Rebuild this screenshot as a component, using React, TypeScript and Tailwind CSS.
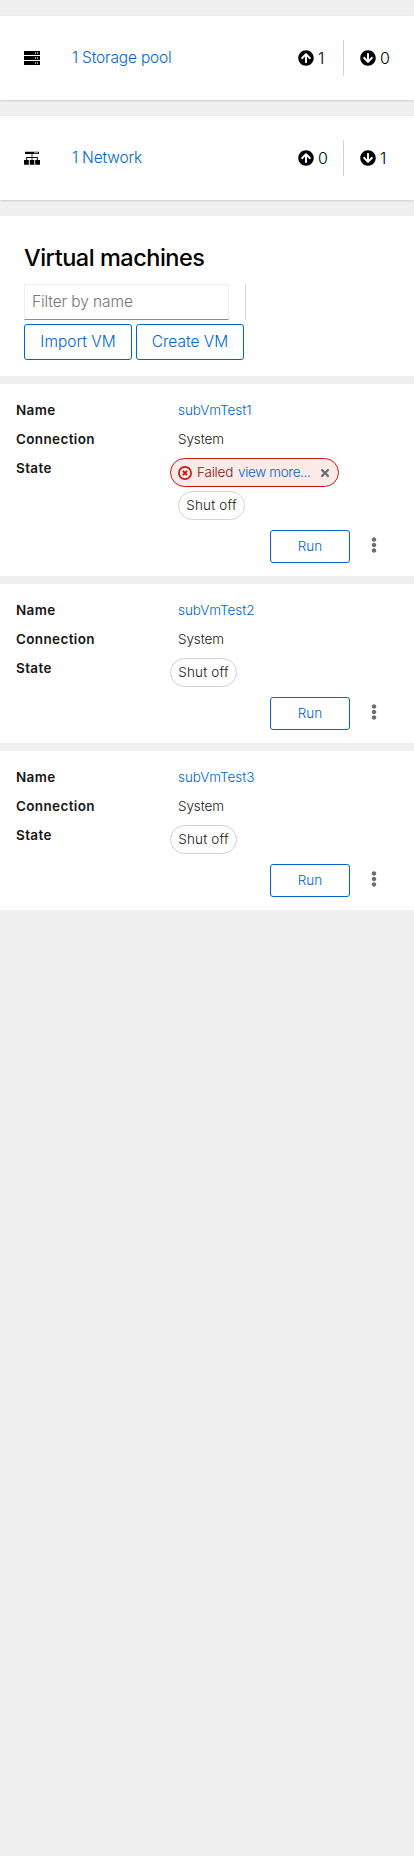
import React from "react";
import { FaArrowCircleUp, FaArrowCircleDown, FaTimes, FaEllipsisV } from "react-icons/fa";

function StorageIcon() {
  return (
    <svg width="16" height="14" viewBox="0 0 16 14" className="block">
      <path d="M.5 0h15a.5.5 0 0 1 .5.5V4H0V.5A.5.5 0 0 1 .5 0zM0 5h16v4H0zM0 10h16v3.500a.5.5 0 0 1-.5.5H.5a.5.5 0 0 1-.5-.5z" />
      <path fill="#ccc" d="M11 1.200h1v1.600h-1zM13 1.200h1v1.600h-1zM11 6.200h1v1.600h-1zM13 6.200h1v1.600h-1zM11 11.200h1v1.600h-1zM13 11.200h1v1.600h-1z" />
    </svg>
  );
}

function NetworkIcon() {
  return (
    <svg width="16" height="14" viewBox="0 0 16 14" className="block">
      <path d="M1 .7h14V3H1zM7.600 3h.8v3h5.400v3h-1V7H8.400v2h-.8V7H3.200v2h-1V6h5.400zM0 9h4.800v4.700H0zM5.800 9h4.500v4.700H5.800zM11.200 9H16v4.700h-4.800z" />
      <path fill="#ccc" d="M10 1.300h4v1h-4z" />
    </svg>
  );
}

function ErrorIcon() {
  return (
    <svg width="14" height="14" viewBox="0 0 14 14" fill="none" stroke="#c9190b" className="block shrink-0">
      <circle cx="7" cy="7" r="6.100" strokeWidth="1.700" />
      <path d="M4.900 4.900l4.200 4.200M9.100 4.900L4.900 9.100" strokeWidth="1.900" />
    </svg>
  );
}

function ResourceCard({ icon, label, up, down }: { icon: React.ReactNode; label: string; up: number; down: number }) {
  return (
    <section className="flex h-[84px] items-center bg-white px-6 text-[15.5px] font-[360] shadow-[0_1px_2px_0_rgba(3,3,3,0.12),0_0_2px_0_rgba(3,3,3,0.06)]">
      <span className="w-12">{icon}</span>
      <a className="flex-1 pb-px tracking-[-0.18px] text-[#0066cc]">{label}</a>
      <div className="flex h-9 items-center">
        <span className="flex w-[45px] items-center gap-1">
          <FaArrowCircleUp size={16} />
          <span className="pb-px text-base">{up}</span>
        </span>
        <span className="h-9 w-px bg-[#d2d2d2]" />
        <span className="ml-4 flex w-[30px] items-center gap-1">
          <FaArrowCircleDown size={16} />
          <span className="pb-px text-base">{down}</span>
        </span>
      </div>
    </section>
  );
}

function Pill({ children }: { children: React.ReactNode }) {
  return (
    <span className="flex h-[29px] w-[67px] items-center justify-center rounded-full border border-[#d2d2d2] pb-px tracking-[0.15px]">
      {children}
    </span>
  );
}

function VmRow({ name, failed }: { name: string; failed?: boolean }) {
  return (
    <article className="bg-white px-4 pt-4 pb-[13px] text-[13.5px] leading-[21px] font-[360] text-[#151515]">
      <dl className="grid grid-cols-[162px_1fr] gap-y-2">
        <dt className="font-semibold tracking-[0.35px]">Name</dt>
        <dd className="tracking-[-0.05px] text-[#0066cc]">{name}</dd>
        <dt className="font-semibold tracking-[0.35px]">Connection</dt>
        <dd className="tracking-[-0.1px]">System</dd>
        <dt className="font-semibold tracking-[0.35px]">State</dt>
        <dd className="-ml-2 flex flex-col items-start gap-1">
          {failed && (
            <span className="flex h-[29px] w-[169px] items-center rounded-full border border-[#c9190b] bg-[#faeae8] pl-[7px] whitespace-nowrap">
              <ErrorIcon />
              <span className="ml-[5px] w-[37px] pb-px tracking-[-0.2px] text-[#7d1007]">Failed</span>
              <a className="ml-1 pb-px tracking-[-0.35px] text-[#0066cc]">view more...</a>
              <FaTimes size={12} className="mr-[7px] ml-auto shrink-0 text-[#6a6e73]" />
            </span>
          )}
          <div className={failed ? "ml-2" : ""}>
            <Pill>Shut off</Pill>
          </div>
        </dd>
      </dl>
      <div className="mt-[10px] flex justify-end">
        <button className="h-[33px] w-20 rounded-[3px] border border-[#0066cc] pb-px text-[#0066cc]">Run</button>
        <FaEllipsisV size={16} className="mx-4 mt-[7px] text-[#6a6e73]" />
      </div>
    </article>
  );
}

export default function App() {
  return (
    <main className="min-h-[1856px] bg-[#f0f0f0] pt-4 font-['Inter','Liberation_Sans',sans-serif] text-base text-black">
      <div className="flex flex-col gap-4">
        <ResourceCard icon={<StorageIcon />} label="1 Storage pool" up={1} down={0} />
        <ResourceCard icon={<NetworkIcon />} label="1 Network" up={0} down={1} />
      </div>
      <section className="mt-4 h-40 bg-white px-6 pt-[26px] text-[15.5px] font-[360]">
        <h2 className="text-[23.5px] leading-8 font-medium tracking-[-0.48px]">Virtual machines</h2>
        <div className="mt-[10px] flex">
          <input
            className="h-9 w-[205px] border border-[#f0f0f0] border-b-[#8a8d90] px-[7px] pb-px tracking-[-0.1px] placeholder:text-[#757575]"
            placeholder="Filter by name"
          />
          <span className="ml-4 h-9 w-px bg-[#d2d2d2]" />
        </div>
        <div className="mt-1 flex gap-1 text-[#0066cc]">
          <button className="h-9 w-[108px] rounded-[3px] border border-[#0066cc] pb-px">Import VM</button>
          <button className="h-9 w-[108px] rounded-[3px] border border-[#0066cc] pb-px">Create VM</button>
        </div>
      </section>
      <div className="mt-2 flex flex-col gap-2">
        <VmRow name="subVmTest1" failed />
        <VmRow name="subVmTest2" />
        <VmRow name="subVmTest3" />
      </div>
    </main>
  );
}
